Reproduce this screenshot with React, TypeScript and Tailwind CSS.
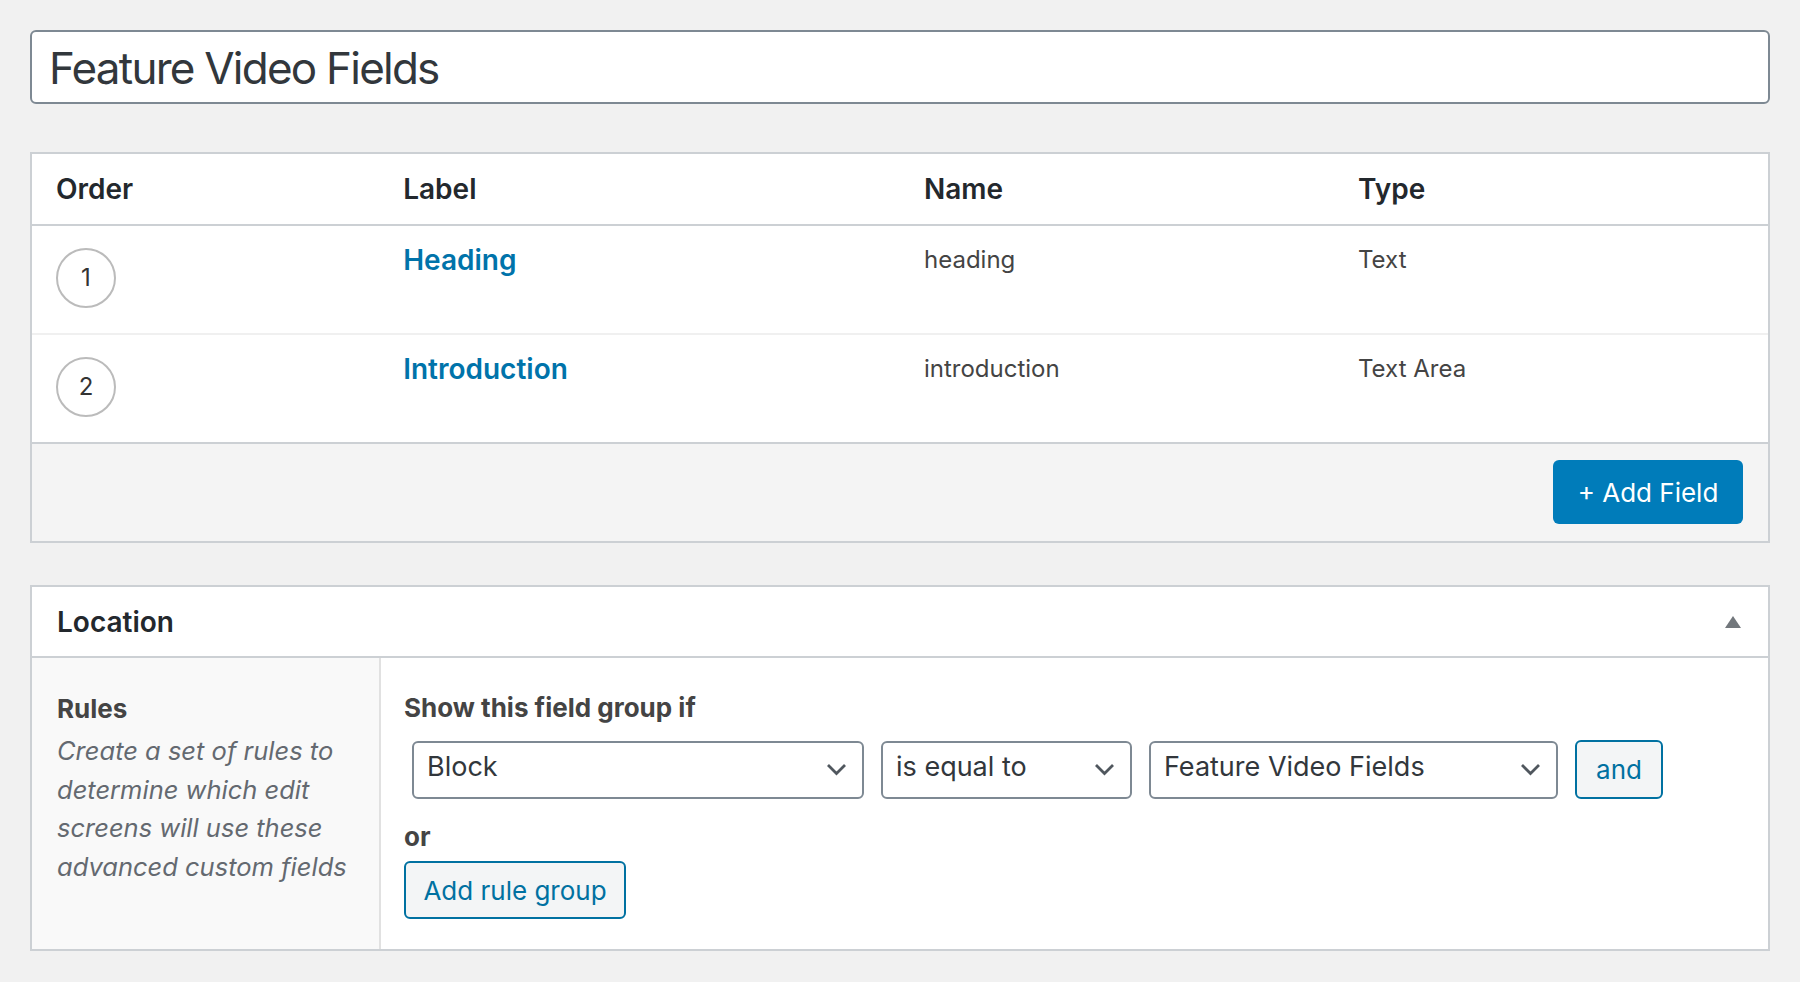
import React from 'react';

const fields = [
  { order: 1, label: 'Heading', name: 'heading', type: 'Text' },
  { order: 2, label: 'Introduction', name: 'introduction', type: 'Text Area' },
];

function Chevron() {
  return (
    <svg width="21" height="13" viewBox="0 0 21 13" className="shrink-0">
      <polyline points="2,2 10.5,10.5 19,2" fill="none" stroke="#50575e" strokeWidth="2.8" />
    </svg>
  );
}

function FakeSelect({ value, width }: { value: string; width: string }) {
  return (
    <div
      className={`${width} h-[58px] shrink-0 rounded-[6px] border-2 border-[#7e8993] bg-white flex items-center justify-between pl-[13px] pr-[15px]`}
    >
      <span className="text-[27px] text-[#32373c] leading-none -mt-[6px]">{value}</span>
      <Chevron />
    </div>
  );
}

export default function App() {
  return (
    <div className="min-h-screen bg-[#f1f1f1] px-[30px] pt-[30px] font-['Inter',sans-serif] text-[#444]">
      {/* title input */}
      <div className="h-[74px] rounded-[6px] border-2 border-[#7e8993] bg-white flex items-center pl-[17px]">
        <span className="text-[44px] tracking-[-0.04em] text-[#32373c] leading-none mt-[1px]">Feature Video Fields</span>
      </div>

      {/* fields table */}
      <div className="mt-[48px] border-2 border-[#ccd0d4] bg-white">
        <div className="grid grid-cols-[20%_30%_25%_25%] h-[72px] items-center border-b-2 border-[#ccd0d4] text-[28px] font-semibold text-[#23282d]">
          <div className="pl-[24px]">Order</div>
          <div className="pl-[24px]">Label</div>
          <div className="pl-[24px]">Name</div>
          <div className="pl-[24px]">Type</div>
        </div>
        {fields.map((f, i) => (
          <div
            key={f.order}
            className={`grid grid-cols-[20%_30%_25%_25%] h-[109px] pt-[16px] border-b-2 ${
              i === fields.length - 1 ? 'border-[#ccd0d4]' : 'border-[#f0f0f0]'
            }`}
          >
            <div className="pl-[24px]">
              <div className="mt-[6px] w-[60px] h-[60px] rounded-full border-2 border-[#bbbbbb] flex items-center justify-center text-[24px] text-[#333]">
                {f.order}
              </div>
            </div>
            <div className="pl-[24px] text-[28px] leading-[36px] font-semibold text-[#0073aa]">{f.label}</div>
            <div className="pl-[24px] text-[24px] leading-[36px] text-[#444]">{f.name}</div>
            <div className="pl-[24px] text-[24px] leading-[36px] text-[#444]">{f.type}</div>
          </div>
        ))}
        <div className="h-[97px] bg-[#f4f4f4] flex justify-end items-start pt-[16px] pr-[25px]">
          <button className="h-[64px] w-[190px] rounded-[6px] bg-[#007cba] text-white text-[26px]">+ Add Field</button>
        </div>
      </div>

      {/* location */}
      <div className="mt-[42px] border-2 border-[#ccd0d4] bg-white">
        <div className="h-[71px] flex items-center justify-between border-b-2 border-[#ccd0d4] pl-[25px] pr-[27px]">
          <span className="text-[28px] font-semibold text-[#23282d]">Location</span>
          <svg width="16" height="12" viewBox="0 0 16 12">
            <polygon points="8,0 16,12 0,12" fill="#72777c" />
          </svg>
        </div>
        <div className="flex h-[291px]">
          <div className="w-[349px] shrink-0 bg-[#f9f9f9] border-r-2 border-[#e1e1e1] pl-[25px] pt-[33px]">
            <div className="text-[26px] leading-[36px] font-bold text-[#444]">Rules</div>
            <p className="mt-[5px] text-[25.5px] leading-[38.5px] italic text-[#646970]">
              Create a set of rules to
              <br />
              determine which edit
              <br />
              screens will use these
              <br />
              advanced custom fields
            </p>
          </div>
          <div className="flex-1 pl-[23px] pt-[32px]">
            <div className="text-[26px] leading-[36px] font-bold text-[#444]">Show this field group if</div>
            <div className="mt-[14px] ml-[8px] flex items-center gap-[17px]">
              <FakeSelect value="Block" width="w-[452px]" />
              <FakeSelect value="is equal to" width="w-[251px]" />
              <FakeSelect value="Feature Video Fields" width="w-[409px]" />
              <button className="h-[59px] w-[88px] rounded-[6px] border-2 border-[#0071a1] bg-[#f3f5f6] text-[26px] text-[#0071a1]">
                and
              </button>
            </div>
            <div className="mt-[20px] text-[26px] leading-[36px] font-bold text-[#444]">or</div>
            <button className="mt-[6px] h-[58px] w-[222px] rounded-[6px] border-2 border-[#0071a1] bg-[#f3f5f6] text-[26px] text-[#0071a1]">
              Add rule group
            </button>
          </div>
        </div>
      </div>
    </div>
  );
}
